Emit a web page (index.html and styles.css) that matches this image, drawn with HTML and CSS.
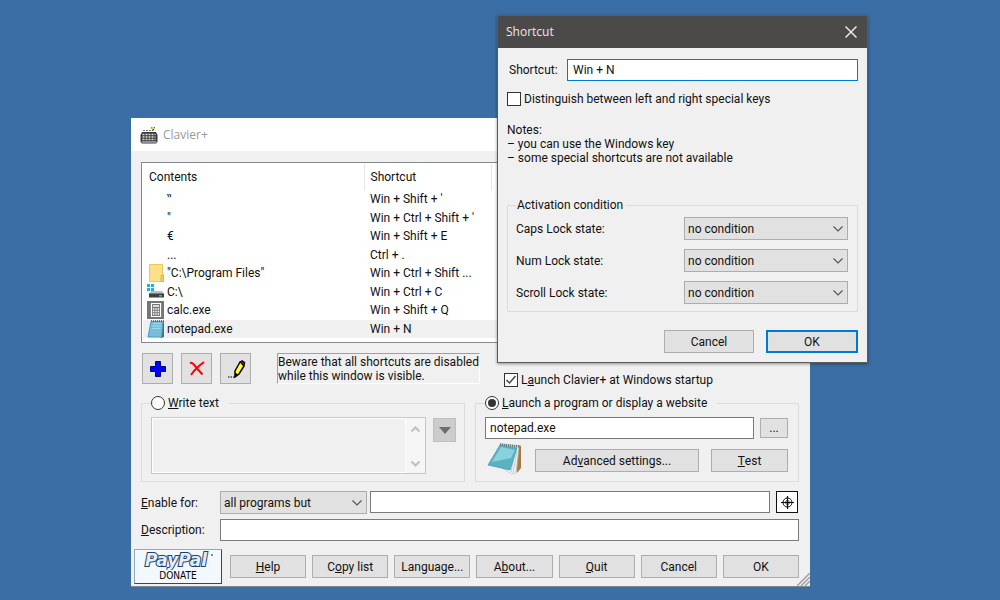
FILE: index.html
```html
<!DOCTYPE html>
<html lang="en">
<head>
<meta charset="utf-8">
<title>Clavier+</title>
<link rel="stylesheet" href="styles.css">
</head>
<body class="desktop">
<main class="window main-window">
  <header class="main-title">
    <svg class="app-icon" width="18" height="18" viewBox="0 0 18 18" aria-hidden="true">
      <path d="M3 4.500h9" stroke="#777" stroke-width="1.200" stroke-dasharray="2 1" fill="none"/>
      <path d="M11 1.500l3 2.500M14.500 1l-2 4" stroke="#222" fill="none"/>
      <circle cx="13" cy="2" r="1.300" fill="#e2d72c"/>
      <path d="M2 6h14l1.500 3v7L16 17.500H2L.5 16V9z" fill="#3a3a3a"/>
      <path d="M2.500 8.500h13M2.500 11h13M2.500 13.500h13" stroke="#ddd" stroke-width="1.500" stroke-dasharray="2 1" fill="none"/>
      <path d="M1.500 16h15" stroke="#aaa" stroke-width="1.500"/>
    </svg>
    <h1 class="title-text">Clavier+</h1>
  </header>

  <section class="list">
    <table class="shortcuts">
      <colgroup><col class="col-contents"><col class="col-shortcut"><col></colgroup>
      <thead><tr><th>Contents</th><th>Shortcut</th><th></th></tr></thead>
      <tbody>
        <tr><td><span class="item"><span class="item-icon"></span>‟</span></td><td>Win + Shift + '</td><td></td></tr>
        <tr><td><span class="item"><span class="item-icon"></span>″</span></td><td>Win + Ctrl + Shift + '</td><td></td></tr>
        <tr><td><span class="item"><span class="item-icon"></span>€</span></td><td>Win + Shift + E</td><td></td></tr>
        <tr><td><span class="item"><span class="item-icon"></span>...</span></td><td>Ctrl + .</td><td></td></tr>
        <tr><td><span class="item"><svg class="item-icon" viewBox="0 0 18 18"><path d="M2.500.5h13v10h1v7h-14z" fill="#ffe08a" stroke="#e8c75d"/><path d="M14 11.500h2.500v6H14z" fill="#f3cf63" stroke="#dcb548"/></svg>"C:\Program Files"</span></td><td>Win + Ctrl + Shift ...</td><td></td></tr>
        <tr><td><span class="item"><svg class="item-icon" viewBox="0 0 18 18"><path d="M0 1h3v3H0zM4 1h3v3H4zM0 5h3v3H0zM4 5h3v3H4z" fill="#16b5ec"/><path d="M4 8h11l2 3H2z" fill="#b9bdbf"/><path d="M2 10.500h15v4H2z" fill="#3b4043"/><path d="M12 12h3v1.500h-3z" fill="#33d04b"/></svg>C:\</span></td><td>Win + Ctrl + C</td><td></td></tr>
        <tr><td><span class="item"><svg class="item-icon" viewBox="0 0 18 18"><path d="M0 0h17v18H0z" fill="#757575"/><path d="M4.500 2.500h9v13h-9z" fill="none" stroke="#fff" stroke-width="1.200"/><path d="M6 5h6" stroke="#fff" stroke-width="1.500"/><path d="M6 8h6M6 10.500h6M6 13h6" stroke="#fff" stroke-width="1.500" stroke-dasharray="1.400 .9"/></svg>calc.exe</span></td><td>Win + Shift + Q</td><td></td></tr>
        <tr class="selected"><td><span class="item"><svg class="item-icon" viewBox="0 0 18 18"><path d="M4 2h13v15l-3 1z" fill="#3f7184"/><path d="M4 1.500h12L14.500 17H1z" fill="#75bfdc" stroke="#4d9dbe"/><path d="M6 3.500h8M5 6h9M4.500 8.500h9" stroke="#a1d8eb"/><path d="M4 1h13" stroke="#465962" stroke-width="1.500" stroke-dasharray="1 1"/></svg>notepad.exe</span></td><td>Win + N</td><td></td></tr>
      </tbody>
    </table>
  </section>

  <section class="tools">
    <button class="btn tool" aria-label="Add"><svg width="20" height="20" viewBox="0 0 20 20"><path d="M7.500 2.500h5v5h5v5h-5v5h-5v-5h-5v-5h5z" fill="#00f" stroke="#00007c"/></svg></button>
    <button class="btn tool" aria-label="Delete"><svg width="20" height="20" viewBox="0 0 20 20"><path d="M3 3.500l3 1 5 6 4.500 5M17 3l-5 4-5 5-3 4" fill="none" stroke="#f00" stroke-width="2"/></svg></button>
    <button class="btn tool" aria-label="Edit"><svg width="20" height="20" viewBox="0 0 20 20"><path d="M9 12l5-9 4 1v3l-5 8-4 3z" fill="#ff3" stroke="#000" stroke-width="1.500"/><path d="M14 3l2-1.500 3 2L17.500 7z" fill="#7b1010" stroke="#000"/><path d="M9 14l3 1-3 3z" fill="#000"/><path d="M2 18h7" stroke="#000" stroke-dasharray="1.500 1"/></svg></button>
    <p class="warning">Beware that all shortcuts are disabled<br>while this window is visible.</p>
    <label class="check startup"><input type="checkbox" class="box" checked><span>L<u>a</u>unch Clavier+ at Windows startup</span></label>
  </section>

  <section class="groups">
    <fieldset class="group">
      <legend class="radio-legend"><label class="check"><input type="radio" name="action" class="radio"><span><u>W</u>rite text</span></label></legend>
      <div class="write-row">
        <div class="memo">
          <textarea class="memo-text" aria-label="Text" disabled></textarea>
          <div class="memo-scroll">
            <svg width="11" height="7" viewBox="0 0 11 7"><path d="M1.500 5.500l4-4 4 4" fill="none" stroke="#bfbfbf" stroke-width="2"/></svg>
            <svg width="11" height="7" viewBox="0 0 11 7"><path d="M1.500 1.500l4 4 4-4" fill="none" stroke="#bfbfbf" stroke-width="2"/></svg>
          </div>
        </div>
        <button class="btn menu-btn" aria-label="Insert" disabled><svg width="12" height="7" viewBox="0 0 12 7"><path d="M0 0h12L6 7z" fill="#6d6d6d"/></svg></button>
      </div>
    </fieldset>
    <fieldset class="group">
      <legend class="radio-legend"><label class="check"><input type="radio" name="action" class="radio" checked><span><u>L</u>aunch a program or display a website</span></label></legend>
      <div class="launch-row">
        <input type="text" class="field grow" aria-label="Program" value="notepad.exe">
        <button class="btn browse">...</button>
      </div>
      <div class="launch-actions">
        <svg class="program-icon" width="36" height="34" viewBox="0 0 36 34" aria-hidden="true">
          <path d="M31 3l3 1v22l-4 5z" fill="#a47a3e"/>
          <path d="M13 2l19 2-3 27-4 1-10-6z" fill="#f2f5f5" stroke="#aebabd" stroke-width=".6"/>
          <path d="M30 9l-4 22M28 9l-4 21M32 10l-3 20" stroke="#9eabad" stroke-width=".6"/>
          <path d="M13 3l17 3-7 22L1 23z" fill="#59b3c5" stroke="#3f95a9" stroke-width=".7"/>
          <path d="M14 5l14 3-4 8L5 20z" fill="#9adbe3" opacity=".75"/>
          <path d="M13 2.500l19 2" stroke="#68777b" stroke-width="2.500" stroke-dasharray="1.200 .8"/>
        </svg>
        <button class="btn advanced">Ad<u>v</u>anced settings...</button>
        <button class="btn test"><u>T</u>est</button>
      </div>
    </fieldset>
  </section>

  <section class="form">
    <label for="scope"><u>E</u>nable for:</label>
    <div class="scope-row">
      <select id="scope" class="select scope"><option>all programs but</option></select>
      <input type="text" class="field grow" aria-label="Programs">
      <button class="target" aria-label="Pick window"><svg width="17" height="17" viewBox="0 0 17 17"><g fill="none" stroke="#111"><circle cx="8.500" cy="8.500" r="4.500"/><circle cx="8.500" cy="8.500" r="2" stroke="#555"/><path d="M8.500 2v13M2 8.500h13" stroke-width="1.200"/></g></svg></button>
    </div>
    <label for="description"><u>D</u>escription:</label>
    <input type="text" id="description" class="field">
  </section>

  <footer class="actions">
    <button class="paypal">
      <svg width="76" height="19" viewBox="0 0 76 19" role="img" aria-label="PayPal"><text x="36" y="15" text-anchor="middle" class="paypal-logo">PayPal</text><circle cx="72" cy="4" r="1" fill="#4b6c91"/></svg>
      <span class="donate">DONATE</span>
    </button>
    <button class="btn action"><u>H</u>elp</button>
    <button class="btn action">C<u>o</u>py list</button>
    <button class="btn action">Lan<u>g</u>uage...</button>
    <button class="btn action">A<u>b</u>out...</button>
    <button class="btn action"><u>Q</u>uit</button>
    <button class="btn action">Cancel</button>
    <button class="btn action">OK</button>
  </footer>
  <svg class="grip" width="13" height="13" viewBox="0 0 13 13" aria-hidden="true"><path d="M0 13L13 0M4 13l9-9M8 13l5-5" stroke="#a0a0a0" stroke-width="1.500"/></svg>
</main>

<div class="window dialog" role="dialog" aria-labelledby="dialog-title">
  <header class="dialog-title">
    <h2 class="title-text" id="dialog-title">Shortcut</h2>
    <button class="close" aria-label="Close"><svg width="12" height="12" viewBox="0 0 12 12"><path d="M.5.5l11 11M11.500.5l-11 11" stroke="#e8e8e8" stroke-width="1.500"/></svg></button>
  </header>
  <div class="dialog-body">
    <div class="key-row">
      <label for="key">Shortcut:</label>
      <input type="text" id="key" class="field focused grow" value="Win + N">
    </div>
    <label class="check distinguish"><input type="checkbox" class="box"><span>Distinguish between left and right special keys</span></label>
    <p class="notes">Notes:<br>– you can use the Windows key<br>– some special shortcuts are not available</p>
    <fieldset class="group conditions">
      <legend class="text-legend">Activation condition</legend>
      <div class="condition-grid">
        <label for="caps">Caps Lock state:</label><select id="caps" class="select"><option>no condition</option></select>
        <label for="num">Num Lock state:</label><select id="num" class="select"><option>no condition</option></select>
        <label for="scroll">Scroll Lock state:</label><select id="scroll" class="select"><option>no condition</option></select>
      </div>
    </fieldset>
    <div class="dialog-actions">
      <button class="btn cancel">Cancel</button>
      <button class="btn default">OK</button>
    </div>
  </div>
</div>
</body>
</html>
```

FILE: styles.css
```css
* { box-sizing: border-box; }

.desktop {
  margin: 0;
  min-height: 100vh;
  background: #3a6ea5;
  color: #111;
  font: 12px/14px Roboto, "Noto Sans", sans-serif;
}

button, input, select, textarea { margin: 0; font: inherit; color: inherit; }
label, legend, .warning, .notes, th, td { white-space: nowrap; }

.window { position: absolute; background: #f0f0f0; }
.main-window { left: 13.1%; top: 118px; width: 67.9%; border-bottom: 1px solid #7c8994; }
.dialog {
  left: 49.7%;
  top: 15px;
  width: 37.1%;
  border: 1px solid #5c5c5a;
  box-shadow: 0 1px 3px #0006;
}

.title-text { margin: 0; font: 12px/16px "Open Sans", sans-serif; }

/* Main window */
.main-title {
  display: flex;
  align-items: center;
  gap: 5px;
  height: 33px;
  padding: 0 9px;
  background: #fff;
  color: #999;
}

.list { margin: 11px 11px 0 10px; padding: 1px 1px 4px; border: 1px solid #828790; background: #fff; }
.shortcuts { width: 100%; height: 174px; table-layout: fixed; border-collapse: collapse; }
.col-contents { width: 221px; }
.col-shortcut { width: 127px; }
.shortcuts th { height: 26px; padding: 0 6px; border-right: 1px solid #e5e5e5; font-weight: normal; text-align: left; }
.shortcuts td { padding: 0 6px; }
.shortcuts td:first-child { padding: 0 4px; }
.selected { background: #f0f0f0; }
.item { display: flex; align-items: center; gap: 2px; height: 18px; }
.item-icon { width: 18px; height: 18px; }

.btn {
  display: flex;
  align-items: center;
  justify-content: center;
  height: 23px;
  padding: 0;
  border: 1px solid #adadad;
  background: #e1e1e1;
  white-space: nowrap;
}

.tools { display: flex; gap: 8px; height: 34px; margin: 10px 11px 0; }
.tool { width: 31px; height: 31px; }
.warning {
  width: 203px;
  height: 31px;
  margin: 0 16px 0 18px;
  padding-top: 1px;
  border: 1px solid;
  border-color: #a0a0a0 #fff #fff #a0a0a0;
}

.check { display: flex; align-items: center; gap: 3px; }
.startup { align-self: flex-end; }
.box, .radio {
  display: grid;
  place-items: center;
  width: 14px;
  height: 14px;
  appearance: none;
  border: 1px solid #333;
  background: #fff;
}
.box:checked { background: #fff url("data:image/svg+xml,%3Csvg xmlns='http://www.w3.org/2000/svg' viewBox='0 0 12 12'%3E%3Cpath d='M1.500 6l3 3 6-7' fill='none' stroke='%23444' stroke-width='1.500'/%3E%3C/svg%3E") center / 12px no-repeat; }
.radio { border-radius: 50%; }
.radio:checked::before { content: ""; width: 8px; height: 8px; border-radius: 50%; background: #333; }

.groups { display: grid; grid-template-columns: 1fr 1fr; gap: 10px; margin: 7px 11px 0 10px; }
.group { min-width: 0; margin: 0; border: 1px solid #dcdcdc; }
.groups .group { padding: 5px 8px 7px 9px; }
.radio-legend { height: 18px; padding: 2px 10px 2px 0; }

.write-row { display: flex; gap: 7px; }
.memo { display: flex; flex: 1; height: 57px; border: 1px solid #c8c8c8; }
.memo-text { flex: 1; min-width: 0; border: 1px solid #fff; background: #f0f0f0; resize: none; overflow: hidden; }
.memo-scroll {
  display: flex;
  flex-direction: column;
  align-items: center;
  justify-content: space-between;
  width: 19px;
  padding: 8px 0 6px;
  background: #f5f5f5;
}
.menu-btn { width: 23px; height: 24px; margin-top: 1px; border-color: #bfbfbf; background: #ccc; }

.field { min-width: 0; height: 22px; padding: 0 4px; border: 1px solid #7a7a7a; background: #fff; outline: none; }
.grow { flex: 1; }
.focused { border-color: #0078d7; padding-left: 5px; }
.launch-row { display: flex; align-items: center; gap: 6px; padding-right: 2px; }
.browse { width: 28px; height: 20px; }
.launch-actions { display: flex; align-items: center; gap: 12px; height: 35px; padding: 8px 2px 0 2px; }
.program-icon { flex: none; margin-top: -4px; }
.advanced { flex: 1; }
.test { width: 77px; }

.form {
  display: grid;
  grid-template-columns: 79px 1fr;
  align-items: center;
  row-gap: 5px;
  margin: 9px 11px 0 10px;
}
.scope-row { display: flex; gap: 3px; height: 23px; }
.select {
  height: 23px;
  padding: 0 3px;
  appearance: none;
  border: 1px solid #adadad;
  border-radius: 0;
  background: #e1e1e1 url("data:image/svg+xml,%3Csvg xmlns='http://www.w3.org/2000/svg' viewBox='0 0 10 6'%3E%3Cpath d='M.5.5l4.500 4.500 4.500-4.500' fill='none' stroke='%23555' stroke-width='1.200'/%3E%3C/svg%3E") right 4px center / 10px 6px no-repeat;
}
.scope { width: 147px; }
.target {
  display: grid;
  place-items: center;
  width: 22px;
  height: 22px;
  margin: 0 1px 0 3px;
  padding: 0;
  border: 1px solid #111;
  background: #fff;
}

.actions { display: flex; align-items: center; gap: 6px; margin: 8px 11px 2px 3px; }
.action { flex: 1 1 0; }
.paypal {
  display: flex;
  flex-direction: column;
  align-items: center;
  width: 88px;
  height: 35px;
  margin-right: 2px;
  padding: 1px 0;
  border: 1px solid;
  border-color: #8fa9c6 #1f4a7d #1f4a7d #8fa9c6;
  background: #f3f8fc;
}
.paypal-logo { font: italic bold 17px "DejaVu Sans", sans-serif; fill: #e4eef7; stroke: #1c4070; stroke-width: 2px; paint-order: stroke; }
.donate { font: 10px/12px "DejaVu Sans Condensed", sans-serif; color: #000; }
.grip { position: absolute; right: 0; bottom: 0; }

/* Shortcut dialog */
.dialog-title {
  display: flex;
  align-items: center;
  justify-content: space-between;
  height: 32px;
  padding: 0 10px 0 8px;
  background: #4c4a48;
  color: #e8e8e8;
}
.close { display: grid; padding: 0; border: 0; background: none; }
.dialog-body { padding: 11px 9px 9px; }
.key-row { display: flex; align-items: center; padding-left: 2px; }
.key-row label { width: 58px; }
.distinguish { margin-top: 11px; }
.notes { margin: 17px 0 0; }
.conditions { margin-top: 33px; padding: 5px 9px 7px 8px; }
.text-legend { padding: 0 3px 0 1px; }
.condition-grid { display: grid; grid-template-columns: 1fr 164px; align-items: center; row-gap: 9px; }
.dialog-actions { display: flex; justify-content: flex-end; gap: 12px; margin-top: 18px; }
.cancel { width: 90px; }
.default { width: 92px; border: 2px solid #0078d7; }
```
